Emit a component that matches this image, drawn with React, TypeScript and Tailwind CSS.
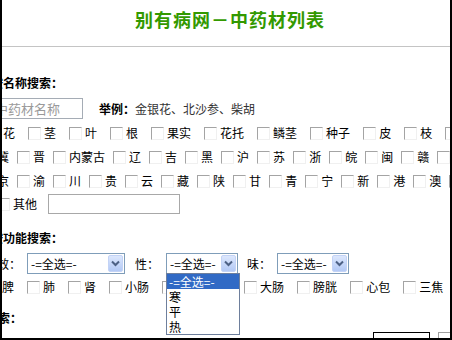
import React from "react";

type Gap = "wide" | "narrow";

const gapClass: Record<Gap, string> = {
  wide: "mr-[13px]",
  narrow: "mr-[8px]",
};

function Box() {
  return (
    <span className="inline-block h-[13px] w-[13px] shrink-0 border-t border-l border-b border-r border-t-[#a4a4a4] border-l-[#a4a4a4] border-b-[#f0f0f0] border-r-[#f0f0f0] bg-white" />
  );
}

// hidden: label sits under the open dropdown list
function CheckItem({ label, gap, hidden }: { label: string; gap: Gap; hidden?: boolean }) {
  return (
    <span className={`flex shrink-0 items-center ${gapClass[gap]}`}>
      <Box />
      <span className={hidden ? "invisible ml-[3px]" : "ml-[3px]"}>{label}</span>
    </span>
  );
}

function CheckRow({
  items,
  gap,
  className,
  covered = [],
}: {
  items: string[];
  gap: Gap;
  className: string;
  covered?: string[];
}) {
  return (
    <div className={`flex h-[20px] items-center whitespace-nowrap leading-[20px] ${className}`}>
      {items.map((it, i) => (
        <CheckItem key={it + i} label={it} gap={gap} hidden={covered.includes(it)} />
      ))}
    </div>
  );
}

function Arrow() {
  return (
    <span className="mr-[1px] ml-auto flex h-[17px] w-[15px] shrink-0 items-center justify-center rounded-[2px] border border-[#c3d3f6] bg-gradient-to-b from-[#dce7fd] to-[#b3c9f5]">
      <svg width="9" height="7" viewBox="0 0 9 7">
        <path d="M1 1.5 L4.5 5 L8 1.5" fill="none" stroke="#4d6185" strokeWidth="2" />
      </svg>
    </span>
  );
}

function Select({ width, open, className }: { width: string; open?: boolean; className: string }) {
  return (
    <div className={`relative flex h-[21px] shrink-0 items-center border border-[#7f9db9] bg-white ${width} ${className}`}>
      <span className="pl-[3px] leading-[19px]">-=全选=-</span>
      <Arrow />
      {open && (
        <div className="absolute top-[19px] left-[-1px] z-10 w-[74px] border border-[#6e7f9c] bg-white">
          <div className="h-[15px] bg-[#316ac5] pl-[2px] leading-[15px] text-white">-=全选=-</div>
          <div className="h-[15px] pl-[2px] leading-[15px]">寒</div>
          <div className="h-[15px] pl-[2px] leading-[15px]">平</div>
          <div className="h-[15px] pl-[2px] leading-[15px]">热</div>
        </div>
      )}
    </div>
  );
}

export default function App() {
  const parts = ["花", "茎", "叶", "根", "果实", "花托", "鳞茎", "种子", "皮", "枝", "全草"];
  const regionA = ["冀", "晋", "内蒙古", "辽", "吉", "黑", "沪", "苏", "浙", "皖", "闽", "赣", "鲁"];
  const regionB = ["京", "渝", "川", "贵", "云", "藏", "陕", "甘", "青", "宁", "新", "港", "澳", "台"];
  const organs = ["脾", "肺", "肾", "小肠", "胃", "胆", "大肠", "膀胱", "心包", "三焦"];

  return (
    <div className="relative h-[340px] w-[452px] overflow-hidden border-r-2 border-b-2 border-l-2 border-black bg-white font-['Noto_Sans_CJK_SC',sans-serif] text-[12px] text-black">
      {/* Title */}
      <div className="h-[47px] border-b border-[#c4c4c4] pt-[9px] pl-[8px] text-center">
        <h1 className="text-[18px] leading-[20px] font-bold tracking-[1px] text-[#339900]">别有病网－中药材列表</h1>
      </div>

      {/* Name search */}
      <div className="mt-[26px] ml-[-11px] h-[20px] leading-[20px] font-bold whitespace-nowrap">按名称搜索：</div>
      <div className="mt-[5px] flex h-[21px] items-center whitespace-nowrap">
        <input
          className="ml-[-11px] h-[21px] w-[92px] shrink-0 border border-[#a5acb5] px-[3px] text-[13px] outline-none placeholder:text-[#9a9a9a]"
          placeholder="中药材名称"
        />
        <span className="ml-[16px] font-bold">举例：</span>
        <span className="text-[#333]">金银花、北沙参、柴胡</span>
      </div>

      <CheckRow items={parts} gap="wide" className="mt-[4px] ml-[-15px]" />
      <CheckRow items={regionA} gap="narrow" className="mt-[4px] ml-[-21px]" />
      <CheckRow items={regionB} gap="narrow" className="mt-[4px] ml-[-21px]" />

      <div className="mt-[3px] ml-[-5px] flex h-[20px] items-center whitespace-nowrap">
        <Box />
        <span className="ml-[3px]">其他</span>
        <input className="ml-[11px] h-[20px] w-[132px] shrink-0 border border-[#a8a8a8] outline-none" />
      </div>

      {/* Function search */}
      <div className="mt-[14px] ml-[-11px] h-[20px] leading-[20px] font-bold whitespace-nowrap">按功能搜索：</div>
      <div className="mt-[5px] ml-[-17px] flex h-[21px] items-center whitespace-nowrap">
        <span className="shrink-0">功效：</span>
        <Select width="w-[98px]" className="ml-[6px]" />
        <span className="ml-[10px] shrink-0">性：</span>
        <Select width="w-[72px]" className="ml-[7px]" open />
        <span className="ml-[9px] shrink-0">味：</span>
        <Select width="w-[72px]" className="ml-[6px]" />
      </div>

      <CheckRow items={organs} gap="wide" className="mt-[3px] ml-[-16px]" covered={["胃", "胆"]} />

      <div className="mt-[11px] ml-[-40px] h-[20px] leading-[20px] font-bold whitespace-nowrap">综合搜索：</div>

      <div className="mt-[4px] flex">
        <span className="ml-[371px] h-[12px] w-[57px] shrink-0 border border-black" />
        <span className="ml-[8px] h-[12px] w-[20px] shrink-0 border border-[#a0a0a0]" />
      </div>
    </div>
  );
}
